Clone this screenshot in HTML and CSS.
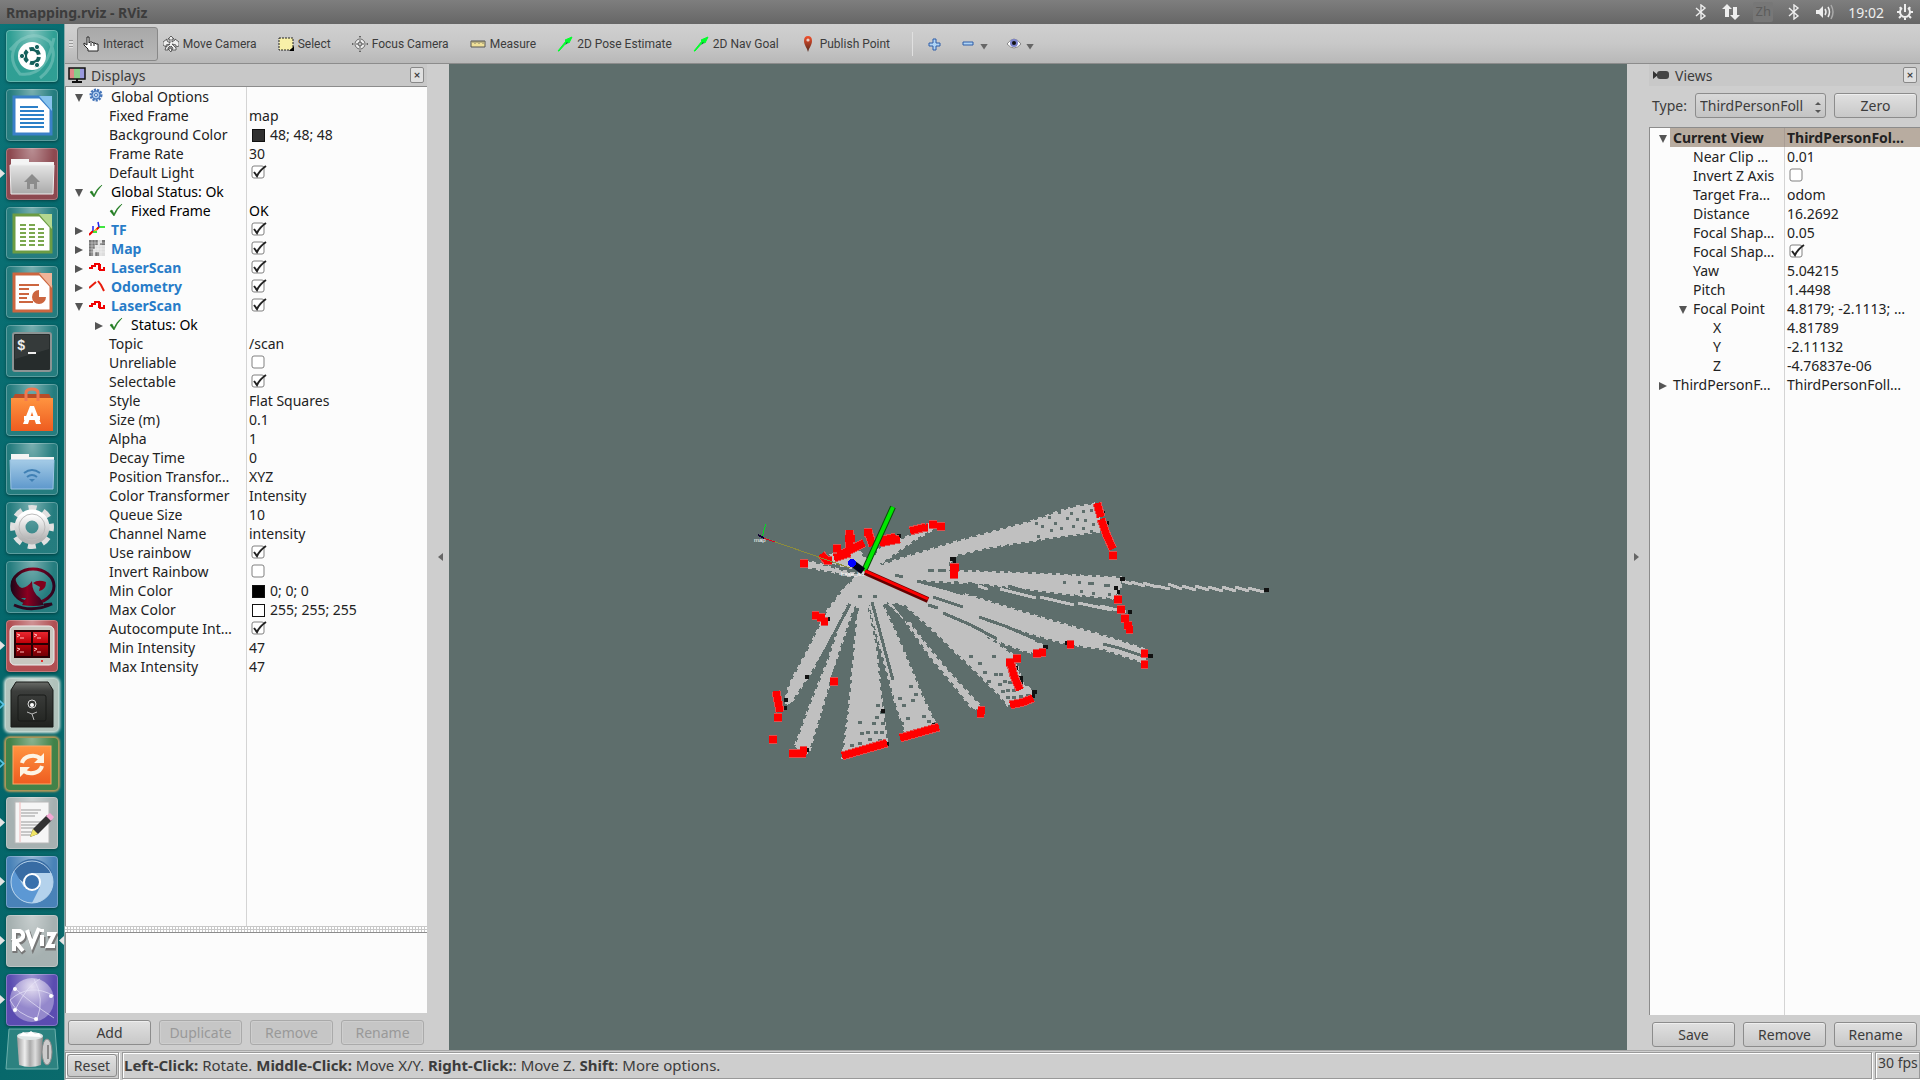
FILE: index.html
```html
<!DOCTYPE html>
<html lang="en">
<head>
<meta charset="utf-8">
<title>Rmapping.rviz - RViz</title>
<link rel="stylesheet" href="styles.css">
</head>
<body>
<svg class="defs" aria-hidden="true">
  <defs>
    <symbol id="tick" viewBox="0 0 16 16"><path d="M1 9l2-1 2 4Q8 5 13 2 8 7 5 14z" fill="#1e7a1e" stroke="#1e7a1e" stroke-width=".6"/></symbol>
    <symbol id="scan" viewBox="0 0 16 16"><path d="M0 9h3V7h3V5h4v6M10 6h1v5h4V9h1" fill="none" stroke="#f00000" stroke-width="2"/></symbol>
    <symbol id="arrow" viewBox="0 0 16 16"><path d="M1 15L9 5 8 4l7-3-3 6-2-1-8 9z" fill="#00ff2a" stroke="#00ff2a"/><path d="M8 9l2-3 1 1z" fill="#063"/></symbol>
    <symbol id="bt" viewBox="0 0 16 16"><path d="M3 4l9 8-4 3V1l4 3-9 8" fill="none" stroke="#eee" stroke-width="1.4"/></symbol>
    <linearGradient id="silver" x2="0" y2="1"><stop stop-color="#fff"/><stop offset="1" stop-color="#b4b4b4"/></linearGradient>
    <linearGradient id="folder" x2="0" y2="1"><stop stop-color="#e4e4e4"/><stop offset="1" stop-color="#aaa"/></linearGradient>
    <linearGradient id="blue" x2="0" y2="1"><stop stop-color="#a4cbe6"/><stop offset="1" stop-color="#5e98cc"/></linearGradient>
    <linearGradient id="orange" x2="0" y2="1"><stop stop-color="#ff9440"/><stop offset="1" stop-color="#ee5c20"/></linearGradient>
    <linearGradient id="pin" x2="0" y2="1"><stop stop-color="#f4502c"/><stop offset="1" stop-color="#50281c"/></linearGradient>
    <linearGradient id="redscreen" x2="0" y2="1"><stop stop-color="#e82830"/><stop offset=".45" stop-color="#c00008"/><stop offset="1" stop-color="#700006"/></linearGradient>
    <linearGradient id="safe" x2="0" y2="1"><stop stop-color="#6a6c68"/><stop offset=".2" stop-color="#3c3e3c"/><stop offset="1" stop-color="#20221f"/></linearGradient>
    <linearGradient id="can"><stop stop-color="#999"/><stop offset=".3" stop-color="#eee"/><stop offset=".5" stop-color="#aaa"/><stop offset=".7" stop-color="#ddd"/><stop offset="1" stop-color="#888"/></linearGradient>
    <radialGradient id="globe" cy=".2"><stop stop-color="#e6e0f2"/><stop offset="1" stop-color="#9488cc"/></radialGradient>
    <linearGradient id="wine"><stop stop-color="#1c0618"/><stop offset=".5" stop-color="#8c0020"/><stop offset="1" stop-color="#2c0620"/></linearGradient>
  </defs>
</svg>

<header class="titlebar">
  <h1>Rmapping.rviz - RViz</h1>
  <div class="tray">
    <svg width="16" height="16"><use href="#bt"/></svg>
    <svg width="18" height="18" viewBox="0 0 18 18"><path d="M5 1l5 5H7v8H3V6H0zM13 17l-5-5h3V4h4v8h3z" fill="#eee"/></svg>
    <span class="ime">Zh</span>
    <svg width="16" height="16"><use href="#bt"/></svg>
    <svg width="20" height="16" viewBox="0 0 20 16"><path d="M1 6h3l4-4v12l-4-4H1z" fill="#eee"/><path d="M10 5q2 3 0 6M13 3q3 5 0 10" fill="none" stroke="#eee" stroke-width="1.5"/><path d="M16 1q4 7 0 14" fill="none" stroke="#aaa" stroke-width="1.5"/></svg>
    <time>19:02</time>
    <svg width="16" height="16" viewBox="0 0 16 16"><path d="M5 4a5 5 0 1 0 6 0M8 0v8" fill="none" stroke="#eee" stroke-width="2"/><path d="M3 3l1 2M13 3l-1 2M0 8h3M13 8h3M2 14l2-2M14 14l-2-2M8 14v2" stroke="#eee" stroke-width="2"/></svg>
  </div>
</header>

<div class="desktop">
<nav class="launcher" aria-label="Launcher">
  <button class="tile dash" aria-label="Dash"><svg viewBox="0 0 52 52"><path d="M4 20Q24-4 44 12 54 32 34 48M48 8Q40 48 14 44 0 28 12 12" fill="none" stroke="#9fd8cf" stroke-opacity=".4" stroke-width="3"/><circle cx="26" cy="26" r="14" fill="#fff"/><circle cx="26" cy="26" r="7" fill="none" stroke="#14605c" stroke-width="4" stroke-dasharray="12 2.66" stroke-dashoffset="-1"/><g fill="#14605c" stroke="#fff"><circle cx="16" cy="26" r="2.6"/><circle cx="31" cy="17" r="2.6"/><circle cx="31" cy="35" r="2.6"/></g></svg></button>
  <button class="tile" aria-label="Writer"><svg viewBox="0 0 52 52"><path d="M8 8h26l11 12v25H8z" fill="#fff" stroke="#3a80c8" stroke-width="3"/><path d="M33 7h13v15z" fill="#86c2ec"/><path d="M14 18h18M14 22h24M14 26h24M14 30h24M14 34h24M14 38h24" stroke="#2c80c8" stroke-width="2"/></svg></button>
  <button class="tile files running" aria-label="Files"><svg viewBox="0 0 52 52"><path d="M5 18v-7h18v3h25v6z" fill="#f4f4f4"/><path d="M4 17h44l-1 29H5z" fill="url(#folder)" stroke="#eee"/><path d="M26 26l8 8h-3v7h-3v-5h-4v5h-3v-7h-3z" fill="#8c8c8c"/></svg></button>
  <button class="tile" aria-label="Calc"><svg viewBox="0 0 52 52"><path d="M8 8h26l11 12v25H8z" fill="#fff" stroke="#6c9c44" stroke-width="3"/><path d="M33 7h13v15z" fill="#b4d890"/><path d="M14 18h18M14 22h24M14 26h24M14 30h24M14 34h24M14 38h24" stroke="#7ca850" stroke-width="2" stroke-dasharray="6 3"/></svg></button>
  <button class="tile" aria-label="Impress"><svg viewBox="0 0 52 52"><path d="M8 8h26l11 12v25H8z" fill="#fff" stroke="#cc6640" stroke-width="3"/><path d="M33 7h13v15z" fill="#f0b498"/><path d="M13 19h20M13 23h10M13 28h10M13 32h8M13 36h14" stroke="#cc6640" stroke-width="2"/><path d="M33 24a7 7 0 1 0 7 7h-7z" fill="#cc6640"/></svg></button>
  <button class="tile" aria-label="Terminal"><svg viewBox="0 0 52 52"><rect x="7" y="8" width="38" height="38" rx="2" fill="#262c2c" stroke="#8c9494" stroke-width="2"/><path d="M9 10h34v14L9 34z" fill="#fff" opacity=".07"/><text x="11" y="25" class="prompt">$</text><path d="M22 28h8" stroke="#eee" stroke-width="2"/></svg></button>
  <button class="tile" aria-label="Software"><svg viewBox="0 0 52 52"><path d="M5 17l4-7h34l4 7z" fill="#b84c28"/><path d="M5 14h42v33H5z" fill="url(#orange)"/><path d="M20 17V9q0-4 6-4t6 4v8" fill="none" stroke="#f07850" stroke-width="3"/><path d="M17 40l7-18h4l7 18h-5l-4-12-4 12z" fill="#fff"/><path d="M18 34h16" stroke="#fff" stroke-width="4"/></svg></button>
  <button class="tile" aria-label="Network"><svg viewBox="0 0 52 52"><path d="M5 18v-7h18v3h25v6z" fill="#f4f4f4"/><path d="M4 17h44l-1 29H5z" fill="url(#blue)" stroke="#9cc4e4"/><path d="M18 30q8-6 16 0M21 34q5-4 10 0" fill="none" stroke="#4080b4" stroke-width="2"/><path d="M23 36h6l-3 3z" fill="#4080b4"/></svg></button>
  <button class="tile" aria-label="Settings"><svg viewBox="0 0 52 52"><circle cx="26" cy="25" r="19" fill="none" stroke="#e0e0e0" stroke-width="6" stroke-dasharray="8 6.92" stroke-dashoffset="4"/><circle cx="26" cy="25" r="12" fill="none" stroke="url(#silver)" stroke-width="11"/><circle cx="26" cy="25" r="13" fill="none" stroke="#bbb"/></svg></button>
  <button class="tile" aria-label="Browser"><svg viewBox="0 0 52 52"><ellipse cx="27" cy="25" rx="21" ry="17" fill="none" stroke="url(#wine)" stroke-width="3"/><path d="M5 27q-1-8 4-12 1 10 7 12 6-1 10-7 0 12 8 17l4 7q-10 2-22 0l4-7Q6 38 5 27z" fill="url(#wine)"/><path d="M27 22q5-4 13-1 0 8-7 9l1-4z" fill="#80001c"/><path d="M8 44q18 8 38-1l-8 1" fill="none" stroke="#2c0820" stroke-width="3"/></svg></button>
  <button class="tile red running" aria-label="Terminator"><svg viewBox="0 0 52 52"><rect x="4" y="6" width="44" height="39" rx="5" fill="#c8c8c0" stroke="#eee"/><rect x="8" y="10" width="36" height="28" fill="#280004"/><path d="M10 12h15v11H10zM27 12h15v11H27zM10 25h15v11H10zM27 25h15v11H27z" fill="url(#redscreen)"/><path d="M11 14l3 1-3 2M14 18h4M28 14l3 1-3 2M31 18h4M11 28l3 1-3 2M14 32h4M28 28l3 1-3 2M31 32h4" fill="none" stroke="#fbb"/><circle cx="36" cy="41" r="1" fill="#e00"/></svg></button>
  <button class="tile pale starting" aria-label="Safe"><svg viewBox="0 0 52 52"><path d="M5 11l5-8h32l5 8v37H5z" fill="url(#safe)" stroke="#181a18"/><rect x="12" y="16" width="28" height="26" rx="2" fill="none" stroke="#181a18"/><circle cx="26" cy="25" r="4" fill="none" stroke="#ddd"/><circle cx="26" cy="26" r="2" fill="#fff"/><path d="M26 35l-5-2M26 35l5-2M26 35l2 6" stroke="#bbb"/></svg></button>
  <button class="tile green starting" aria-label="Updater"><svg viewBox="0 0 52 52"><rect x="7" y="8" width="38" height="38" fill="url(#orange)" stroke="#ffa868"/><path d="M16 25a11 9 0 0 1 18-5M36 28a11 9 0 0 1-18 5" fill="none" stroke="#fdf4e4" stroke-width="4"/><path d="M38 15v10H28zM14 39V29h10z" fill="#fdf4e4"/></svg></button>
  <button class="tile grey running" aria-label="Text Editor"><svg viewBox="0 0 52 52"><path d="M9 5h34v41H9z" fill="#f6f6f6" stroke="#b8b8b8"/><path d="M14 5v40" stroke="#f0b8b8"/><path d="M15 13h20M15 16h17M15 19h14M15 25h21M15 28h20M15 31h16M15 35h16M15 38h10" stroke="#999"/><path d="M24 40l3-8 14-14 5 5-14 14z" fill="#333"/><path d="M24 40l3-8 5 5z" fill="#f0e464"/><path d="M40 19l4-3 4 4-3 4z" fill="#f4a8d4"/></svg></button>
  <button class="tile chromium running" aria-label="Chromium"><svg viewBox="0 0 52 52"><circle cx="26" cy="26" r="21" fill="#b4d2ec"/><path d="M6 18A21 21 0 0 1 46 17H26l-9 9z" fill="#386ca4"/><path d="M8 14Q2 24 7 35q7 12 19 12l8-16H18z" fill="#5c98d4"/><circle cx="26" cy="26" r="21" fill="none" stroke="#b8d4ec"/><circle cx="26" cy="26" r="9" fill="#fff"/><circle cx="26" cy="26" r="7" fill="#3870ac"/></svg></button>
  <button class="tile grey running active" aria-label="RViz"><svg viewBox="0 0 52 52"><g fill="none" stroke="#777" stroke-width="5" transform="translate(1 2)"><path d="M8 36V16h6q4 2 3 6-2 4-8 4l8 10M21 15l5 15 7-17M36 20v11M41 19h7l-6 12h7"/></g><g fill="none" stroke="#fff" stroke-width="4"><path d="M8 36V16h6q4 2 3 6-2 4-8 4l8 10M21 15l5 15 7-17M36 20v11M41 19h7l-6 12h7M36 14v3"/></g></svg></button>
  <button class="tile violet running" aria-label="Web"><svg viewBox="0 0 52 52"><circle cx="26" cy="26" r="22" fill="url(#globe)"/><path d="M4 26q20-18 44-4M10 15q12 12 38 29M9 36Q22 10 34 5M31 45q8-20-3-40M4 26q6 14 28 20" fill="none" stroke="#e6e2f6" stroke-opacity=".7"/><g fill="#fff"><circle cx="9" cy="15" r="2"/><circle cx="45" cy="22" r="2"/><circle cx="9" cy="36" r="2"/><circle cx="30" cy="45" r="2"/></g></svg></button>
  <button class="trash" aria-label="Trash"><svg viewBox="0 0 54 42"><path d="M4 1h46l3 40H1z" fill="#2c8280" stroke="#6cb0ac"/><path d="M12 9h26l-2 28q-11 4-22 0z" fill="url(#can)"/><ellipse cx="25" cy="8" rx="13" ry="4" fill="#dfe6e6"/><path d="M14 8l4-4 4 2 4-3 4 3 4-1 2 4" fill="#fff"/><ellipse cx="42" cy="24" rx="5" ry="13" fill="#ccc" stroke="#888"/><path d="M43 17v14" stroke="#888" stroke-width="2"/></svg></button>
</nav>

<div class="app">
  <div class="toolbar" role="toolbar">
    <span class="grip"></span>
    <button class="tool pressed"><svg viewBox="0 0 16 16"><path d="M4 1h2v6l1-1h2l1 1h2l1 1h2v7H5v-2L1 9V7l3 2z" fill="#fff" stroke="#222"/><path d="M8 7v3M11 7v3" stroke="#222"/></svg>Interact</button>
    <button class="tool"><svg viewBox="0 0 16 16"><path d="M8 0l3 3H9v3l3-2V3l4 3v4l-3 1V9L9 8l4 4v2H9l1-2-2-2v3h1l-1 3-3-3h2v-3l-2 2v2H2l1-3 4-3-4 1v2L0 9V6l4-3v2l3 2V3H5z" fill="#eee" stroke="#444" stroke-width=".8"/></svg>Move Camera</button>
    <button class="tool"><svg viewBox="0 0 16 16"><path d="M1 2h14v12H1z" fill="#f8f0a8" stroke="#222" stroke-dasharray="2 1"/><path d="M16 10v5h-5z" fill="#000"/></svg>Select</button>
    <button class="tool"><svg viewBox="0 0 16 16"><circle cx="8" cy="8" r="5" fill="#eee" stroke="#666"/><path d="M8 0v16M0 8h16" stroke="#666" stroke-width="2"/><path d="M8 1v14M1 8h14" stroke="#ddd"/><circle cx="8" cy="8" r="2" fill="none" stroke="#666"/></svg>Focus Camera</button>
    <button class="tool"><svg viewBox="0 0 16 16"><path d="M1 5h14v6H1z" fill="#f0e098" stroke="#555"/><path d="M3 5v2M5 5v3M7 5v2M9 5v3M11 5v2M13 5v3" stroke="#555" stroke-width=".7"/></svg>Measure</button>
    <button class="tool"><svg><use href="#arrow"/></svg>2D Pose Estimate</button>
    <button class="tool"><svg><use href="#arrow"/></svg>2D Nav Goal</button>
    <button class="tool"><svg viewBox="0 0 16 16"><path d="M8 0Q4 0 4 5q0 3 3 8l1 3 1-3q3-5 3-8 0-5-4-5z" fill="url(#pin)"/><circle cx="8" cy="4" r="1.6" fill="#e8d0c8"/></svg>Publish Point</button>
    <span class="sep"></span>
    <button class="tool icon" aria-label="Add tool"><svg viewBox="0 0 16 16"><path d="M7 3h3v4h4v3h-4v4H7v-4H3V7h4z" fill="#b0d4f4" stroke="#2c5ca8"/></svg></button>
    <button class="tool icon" aria-label="Remove tool"><svg viewBox="0 0 16 16"><path d="M3 6h10v3H3z" fill="#b0d4f4" stroke="#2c5ca8"/></svg><i class="drop"></i></button>
    <button class="tool icon" aria-label="Visibility"><svg viewBox="0 0 16 16"><path d="M1 8q7-10 14 0-7 8-14 0z" fill="#fff" stroke="#888"/><circle cx="8" cy="7" r="4" fill="#7c84cc"/><circle cx="8" cy="7" r="2" fill="#111"/></svg><i class="drop"></i></button>
  </div>

  <main class="workspace">
    <section class="dock displays">
      <div class="dock-title"><svg width="18" height="16" viewBox="0 0 18 16"><path d="M1 1h16v11H1z" fill="#d88"/><path d="M6 1h6v11H6z" fill="#8c8"/><path d="M12 1h5v11h-5z" fill="#99d"/><path d="M1 1h16v11H1z" fill="none" stroke="#111" stroke-width="1.5"/><path d="M8 12h2v2h4v2H4v-2h4z" fill="#111"/></svg><h2>Displays</h2><button class="close" aria-label="Close Displays">×</button></div>
      <div class="tree">
        <table>
          <colgroup><col class="name"><col></colgroup>
          <tr><td class="d0"><i class="open"></i><svg viewBox="0 0 16 16"><circle cx="7" cy="7" r="5" fill="#9cc0e8" stroke="#4474b8" stroke-width="3" stroke-dasharray="2 1"/><circle cx="7" cy="7" r="4" fill="#a8c8ec" stroke="#4474b8"/><circle cx="7" cy="7" r="1.5" fill="#fff" stroke="#4474b8"/></svg>Global Options</td><td></td></tr>
          <tr><td class="d1">Fixed Frame</td><td>map</td></tr>
          <tr><td class="d1">Background Color</td><td><b class="swatch dark"></b>48; 48; 48</td></tr>
          <tr><td class="d1">Frame Rate</td><td>30</td></tr>
          <tr><td class="d1"><label for="c1">Default Light</label></td><td><input type="checkbox" id="c1" checked></td></tr>
          <tr class="ok"><td class="d0"><i class="open"></i><svg><use href="#tick"/></svg>Global Status: Ok</td><td></td></tr>
          <tr class="ok"><td class="d1"><svg><use href="#tick"/></svg>Fixed Frame</td><td>OK</td></tr>
          <tr class="plugin"><td class="d0"><i class="shut"></i><svg viewBox="0 0 16 16"><path d="M0 14l4-4M10 6L7 9" stroke="#e00" stroke-width="2"/><path d="M10 6h6M4 11h4" stroke="#0d0" stroke-width="1.5"/><path d="M9 1l1 5M4 5v5" stroke="#22e" stroke-width="1.5"/><path d="M5 10l3-2" stroke="#ea0" stroke-width="1.5"/></svg><label for="c2">TF</label></td><td><input type="checkbox" id="c2" checked></td></tr>
          <tr class="plugin"><td class="d0"><i class="shut"></i><svg viewBox="0 0 16 16"><path d="M0 0h16v16H0z" fill="#ddd"/><path d="M0 0h9v5H6v4H4v7H0zM13 0h3v5h-5V3h2zM6 12h4v4H6z" fill="#777"/><path d="M3 0v16M6 0v16M9 0v16M12 0v16M0 3h16M0 6h16M0 9h16M0 12h16" stroke="#fff" stroke-width=".4"/></svg><label for="c3">Map</label></td><td><input type="checkbox" id="c3" checked></td></tr>
          <tr class="plugin"><td class="d0"><i class="shut"></i><svg><use href="#scan"/></svg><label for="c4">LaserScan</label></td><td><input type="checkbox" id="c4" checked></td></tr>
          <tr class="plugin"><td class="d0"><i class="shut"></i><svg viewBox="0 0 16 16"><path d="M0 10l7-6M9 3l3 4 3 6" fill="none" stroke="#e81c0c" stroke-width="2"/></svg><label for="c5">Odometry</label></td><td><input type="checkbox" id="c5" checked></td></tr>
          <tr class="plugin"><td class="d0"><i class="open"></i><svg><use href="#scan"/></svg><label for="c6">LaserScan</label></td><td><input type="checkbox" id="c6" checked></td></tr>
          <tr class="ok"><td class="d1 has-toggle"><i class="shut"></i><svg><use href="#tick"/></svg>Status: Ok</td><td></td></tr>
          <tr><td class="d1">Topic</td><td>/scan</td></tr>
          <tr><td class="d1"><label for="c7">Unreliable</label></td><td><input type="checkbox" id="c7"></td></tr>
          <tr><td class="d1"><label for="c8">Selectable</label></td><td><input type="checkbox" id="c8" checked></td></tr>
          <tr><td class="d1">Style</td><td>Flat Squares</td></tr>
          <tr><td class="d1">Size (m)</td><td>0.1</td></tr>
          <tr><td class="d1">Alpha</td><td>1</td></tr>
          <tr><td class="d1">Decay Time</td><td>0</td></tr>
          <tr><td class="d1">Position Transfor…</td><td>XYZ</td></tr>
          <tr><td class="d1">Color Transformer</td><td>Intensity</td></tr>
          <tr><td class="d1">Queue Size</td><td>10</td></tr>
          <tr><td class="d1">Channel Name</td><td>intensity</td></tr>
          <tr><td class="d1"><label for="c9">Use rainbow</label></td><td><input type="checkbox" id="c9" checked></td></tr>
          <tr><td class="d1"><label for="c10">Invert Rainbow</label></td><td><input type="checkbox" id="c10"></td></tr>
          <tr><td class="d1">Min Color</td><td><b class="swatch black"></b>0; 0; 0</td></tr>
          <tr><td class="d1">Max Color</td><td><b class="swatch white"></b>255; 255; 255</td></tr>
          <tr><td class="d1"><label for="c11">Autocompute Int…</label></td><td><input type="checkbox" id="c11" checked></td></tr>
          <tr><td class="d1">Min Intensity</td><td>47</td></tr>
          <tr><td class="d1">Max Intensity</td><td>47</td></tr>
        </table>
      </div>
      <div class="splitter"></div>
      <div class="help"></div>
      <div class="buttons"><button class="btn">Add</button><button class="btn" disabled>Duplicate</button><button class="btn" disabled>Remove</button><button class="btn" disabled>Rename</button></div>
    </section>

    <div class="handle"><i class="left"></i></div>

    <section class="viewport" aria-label="3D view">
      <svg viewBox="449 64 1178 986" shape-rendering="crispEdges">
        <!-- free space swept by the laser -->
        <g class="free">
          <path d="M862 572L900 559 953 543 1030 522 1070 508 1094 504 1102 531 1060 536 1030 541 990 547 956 555 949 562 949 571 1040 574 1122 578 1120 590 1112 598 1080 595 1050 592 985 584 917 580 920 583 970 596 1038 617 1110 638 1146 650 1146 663 1103 649 1064 643 1025 632 980 617 1025 636 1046 647 1034 653 1022 650 992 639 960 625 943 612 960 622 978 632 994 642 1014 656 1022 683 1034 692 1030 700 1008 705 1003 699 985 680 960 656 930 627 905 605 884 586z"/>
          <path d="M878 586L890 603 910 624 930 650 954 678 980 706 973 709 950 680 930 656 905 620 888 602z"/>
          <path d="M870 580L884 608 897 636 910 667 922 696 936 726 906 734 896 704 884 660 873 620 866 585z"/>
          <path d="M868 580L866 600 875 642 882 703 887 742 843 757 849 710 854 656 858 610 852 585z"/>
          <path d="M866 580L852 612 836 660 822 708 808 754 795 747 810 706 828 661 846 608z"/>
          <path d="M856 578L846 606 830 640 812 670 790 704 785 702 790 684 806 654 828 610 845 588z"/>
          <path d="M866 572L846 588 844 602 858 606 871 603 884 602 902 604 905 590z"/>
          <path d="M870 577L850 573 807 561 807 567 830 571 860 578z"/>
          <path d="M864 572L880 548 910 536 930 524 938 522 937 527 914 540 874 568z"/>
          <path d="M822 558L856 548 866 560 862 570 840 565z"/>
        </g>
        <path class="ray" d="M968 583l20 6M1000 589l36 9M1040 597l34 8M1078 603l34 7M1100 606l26 6"/>
        <path class="ray" d="M1122 581l10 3M1131 582l14 4M1143 583l14 4M1156 586l14 3M1168 584l14 5M1182 586l14 4M1195 586l14 4M1208 587l15 4M1222 587l14 4M1235 587l14 4M1248 588l16 4"/>
        <!-- unexplored slits between neighbouring beams -->
        <path class="slit" d="M917 581l30 8 16 5M933 597l30 10M928 605l10 3M943 613l28 12 26 14M979 617l26 9 28 12 18 8M1103 644l16 4 24 8M968 583l10 3M984 585l12 4M1008 586l20 6M895 575l8 2M928 570h6M938 570h8M850 604l-16 30-16 30M858 608l-16 44-10 26M872 602l8 30 8 30 5 18M886 604l10 20 6 12M894 604l14 18"/>
        <path class="holes" d="M1035 523h3M1041 526h3M1054 523h3M1048 517h3M1058 512h3M1066 518h3M1070 513h3M1076 519h3M1082 511h3M1084 520h3M1090 510h3M1050 530h3M1060 528h3M1072 526h3M1082 528h3M1092 524h3M1090 531h3M1037 536h3M1070 506h3M1063 582h3M1078 582h3M1088 583h6M1104 585h6M1080 591h3M1092 593h3M1108 594h3M954 582h4M969 656h4M992 656h4M978 663h4M983 672h4M994 674h4M999 674h4M987 681h4M998 684h4M1003 681h4M1008 682h4M1001 691h4M1006 690h4M1012 690h4M1006 697h4M1012 697h4M1019 696h4M1026 695h4M909 686h4M914 694h4M911 700h4M898 698h4M902 705h4M906 718h4M900 723h4M922 716h4M927 721h4M876 705h4M880 712h4M875 717h4M881 723h4M872 723h4M858 722h4M866 732h4M874 732h4M880 732h4M860 733h4M850 745h4M858 743h4M868 739h4M878 740h4M858 596h4M873 596h4"/>
        <!-- occupied cells -->
        <path class="wall" d="M932 522h5M950 559h6M953 563h3M897 536h4M1102 513h3M1106 523h3M1120 579h5M1114 588h4M1117 592h3M1128 612h4M1264 590h5M1148 656h5M1065 643h4M1043 647h5M1015 668h3M1019 678h4M1020 682h3M1032 692h5M1032 696h3M805 677h4M784 700h4M783 708h4M881 711h4M885 744h4M932 725h5M805 750h4M826 619h4M1018 658h3M826 558h4"/>
        <!-- laser returns -->
        <g class="halo">
          <path id="returns" d="M910 531L926 527M926 527h2M929 524h8M937 526h8M845 538h10M849 530V552M838 556L864 543M834 558L850 553M833 548h8M821 554L826 560 832 560M800 563h8M864 532h8M868 531L873 546M880 543L900 539M878 541L896 537M812 615h7M817 617h8M821 621h7M830 681h8M776 691L780 712M774 717h8M769 739h8M789 753h17M800 750h7M842 756L887 743M900 738L939 727M977 713h7M978 710h7M950 567h9M950 574h8M1097 503L1101 517M1101 519L1107 536 1113 549M1109 555h8M1114 599h8M1117 609h8M1121 618h8M1124 625h8M1126 629h7M1033 653h8M1039 652h7M1067 644h7M1141 653h7M1141 664h7M1006 662h8M1013 658h8M1010 660L1014 676 1020 690M1010 705L1024 702 1033 698"/>
        </g>
        <use href="#returns" class="hit"/>
        <!-- odometry path and frames -->
        <path d="M764 538L850 568" stroke="#8c8c3c"/>
        <path d="M762 537l4-13" stroke="#0d2"/><path d="M763 538l12 4" stroke="#d02"/><path d="M758 535l6 3" stroke="#103" stroke-width="2"/>
        <text x="754" y="542">map</text>
        <text x="841" y="576">base_link</text>
        <g shape-rendering="auto" fill="none">
          <path d="M864 571L893 507" stroke="#075007" stroke-width="6"/><path d="M864 571L893 507" stroke="#00e800" stroke-width="4"/>
          <path d="M865 572L928 600" stroke="#600" stroke-width="6"/><path d="M865 571L928 599" stroke="#f00" stroke-width="3"/>
          <path d="M852 563L863 571" stroke="#000018" stroke-width="7"/>
        </g>
        <circle cx="852" cy="563" r="4" fill="#00f"/>
      </svg>
    </section>

    <div class="handle"><i class="right"></i></div>

    <section class="dock views">
      <div class="dock-title"><svg width="18" height="16" viewBox="0 0 18 16"><path d="M1 4l5 4-5 4z" fill="#333"/><rect x="5" y="4" width="12" height="8" rx="3" fill="#444"/></svg><h2>Views</h2><button class="close" aria-label="Close Views">×</button></div>
      <div class="type-row"><label for="type">Type:</label><span class="combo"><select id="type"><option>ThirdPersonFoll</option></select><i class="up"></i><i class="down"></i></span><button class="btn">Zero</button></div>
      <div class="tree">
        <table>
          <colgroup><col class="name"><col></colgroup>
          <tr class="current"><td class="d0"><i class="open"></i>Current View</td><td>ThirdPersonFol…</td></tr>
          <tr><td class="d1">Near Clip …</td><td>0.01</td></tr>
          <tr><td class="d1"><label for="v1">Invert Z Axis</label></td><td><input type="checkbox" id="v1"></td></tr>
          <tr><td class="d1">Target Fra…</td><td>odom</td></tr>
          <tr><td class="d1">Distance</td><td>16.2692</td></tr>
          <tr><td class="d1">Focal Shap…</td><td>0.05</td></tr>
          <tr><td class="d1"><label for="v2">Focal Shap…</label></td><td><input type="checkbox" id="v2" checked></td></tr>
          <tr><td class="d1">Yaw</td><td>5.04215</td></tr>
          <tr><td class="d1">Pitch</td><td>1.4498</td></tr>
          <tr><td class="d1 has-toggle"><i class="open"></i>Focal Point</td><td>4.8179; -2.1113; …</td></tr>
          <tr><td class="d2">X</td><td>4.81789</td></tr>
          <tr><td class="d2">Y</td><td>-2.11132</td></tr>
          <tr><td class="d2">Z</td><td>-4.76837e-06</td></tr>
          <tr><td class="d0"><i class="shut"></i>ThirdPersonF…</td><td>ThirdPersonFoll…</td></tr>
        </table>
      </div>
      <div class="buttons"><button class="btn">Save</button><button class="btn">Remove</button><button class="btn">Rename</button></div>
    </section>
  </main>

  <footer class="status">
    <div class="cell"><button class="btn">Reset</button></div>
    <p class="cell message"><b>Left-Click:</b> Rotate. <b>Middle-Click:</b> Move X/Y. <b>Right-Click:</b>: Move Z. <b>Shift</b>: More options.</p>
    <div class="cell fps">30 fps</div>
  </footer>
</div>
</div>
</body>
</html>
```
FILE: styles.css
```css
* { box-sizing: border-box; }
body {
  margin: 0;
  min-height: 100vh;
  display: flex;
  flex-direction: column;
  background: #cecece;
  color: #3c3c3c;
  font: 14px/19px "Noto Sans", "Open Sans", sans-serif;
}
button, select { font: inherit; color: inherit; margin: 0; padding: 0; border: 0; background: none; }
h1, h2, p { margin: 0; font-size: inherit; font-weight: normal; }
.defs { position: absolute; width: 0; height: 0; }

/* top panel */
.titlebar {
  display: flex;
  align-items: center;
  justify-content: space-between;
  height: 24px;
  padding: 0 7px 0 6px;
  background: linear-gradient(#7e7e7e, #666);
}
.titlebar h1 { font-weight: bold; color: #3c3c3c; }
.tray { display: flex; align-items: center; gap: 13px; color: #eee; }
.ime { width: 20px; height: 20px; background: #777; color: #5c5c5c; text-align: center; border-radius: 2px; font-size: 13px; }

.desktop { flex: 1; display: flex; }

/* launcher */
.launcher {
  width: 65px;
  flex: none;
  display: flex;
  flex-direction: column;
  gap: 7px;
  padding: 6px 0 0 6px;
  background: linear-gradient(100deg, #0c7478, #04666a 50%, #0a6a6c);
  border-right: 1px solid #8aa;
}
.tile {
  position: relative;
  width: 52px;
  height: 52px;
  border-radius: 4px;
  background: radial-gradient(ellipse at 50% 0, rgba(255,255,255,.45), rgba(255,255,255,.1) 60%), #0c6e70;
  box-shadow: inset 0 0 0 1px rgba(255,255,255,.25), 0 1px 3px rgba(0,40,40,.6);
}
.tile svg, .trash svg { display: block; width: 100%; height: 100%; }
.tile.dash { background-color: #189488; }
.tile.files { background-color: #80343c; }
.tile.red { background-color: #a83c40; }
.tile.pale { background-color: #a8bcb4; box-shadow: 0 0 3px 2px #dfe8e0; }
.tile.green { background-color: #2c7434; box-shadow: 0 0 2px 2px #b49858; }
.tile.grey { background-color: #9ca8a8; }
.tile.chromium { background-color: #3474b0; }
.tile.violet { background-color: #4838a8; }
.running::before, .starting::before, .active::after {
  content: "";
  position: absolute;
  left: -6px;
  top: 21px;
  width: 5px;
  height: 9px;
  background: #e4e4e4;
  clip-path: polygon(0 0, 100% 50%, 0 100%);
}
.starting::before { background: #58c4e4; clip-path: polygon(0 0, 100% 50%, 0 100%, 0 75%, 50% 50%, 0 25%); }
.active::after { left: 53px; clip-path: polygon(100% 0, 0 50%, 100% 100%); }
.trash { width: 54px; height: 42px; margin: -5px 0 10px -1px; }
.prompt { font: bold 14px "Liberation Mono", monospace; fill: #eee; }

.app { flex: 1; min-width: 0; display: flex; flex-direction: column; }

/* toolbar */
.toolbar {
  display: flex;
  align-items: center;
  height: 40px;
  padding: 0 0 0 4px;
  background: linear-gradient(#d0d0d0, #c8c8c8 50%, #b8b8b8);
  border-bottom: 1px solid #8c8c8c;
  font: 12px/16px Roboto, sans-serif;
}
.grip { width: 4px; height: 8px; margin-right: 4px; background: repeating-linear-gradient(#999 0 1px, #ddd 1px 3px); }
.tool { display: flex; align-items: center; gap: 4px; height: 34px; padding: 0 16px 0 5px; white-space: nowrap; }
.tool svg { width: 16px; height: 16px; }
.tool.pressed { padding-right: 13px; border: 1px solid #888; border-radius: 3px; background: linear-gradient(#a8a8a8, #b8b8b8); }
.tool.icon { padding: 0 9px; }
.sep { width: 1px; height: 24px; margin: 0 4px 0 6px; background: #e0e0e0; }
.drop { width: 8px; height: 6px; margin-top: 6px; background: #666; clip-path: polygon(0 0, 100% 0, 50% 100%); }

/* docks */
.workspace { flex: 1; display: flex; }
.dock { flex: none; display: flex; flex-direction: column; }
.displays { width: 362px; }
.views { width: 271px; }
.dock-title { display: flex; align-items: center; gap: 5px; height: 22px; padding: 0 3px; background: #c8c8c8; }
.close {
  width: 14px;
  height: 16px;
  margin-left: auto;
  border: 1px solid #888;
  border-radius: 2px;
  background: #e0e0e0;
  font: bold 9px/13px "DejaVu Sans", sans-serif;
}
.tree {
  flex: 1;
  border: solid #8c8c8c;
  border-width: 1px 0 0 1px;
  color: #222;
}
.displays .tree { background: linear-gradient(#d4d4d4, #d4d4d4) 180px 0 / 1px 100% no-repeat #fcfcfc; }
.views .tree { background: linear-gradient(#d4d4d4, #d4d4d4) 134px 0 / 1px 100% no-repeat #fcfcfc; }
table { width: 100%; table-layout: fixed; border-collapse: collapse; }
.displays .name { width: 181px; }
.views .name { width: 135px; }
td { height: 19px; padding: 0; white-space: nowrap; overflow: hidden; }
td + td { padding-left: 2px; }
td svg { width: 16px; height: 16px; margin: 1px 6px 0 0; vertical-align: top; }
td i { display: inline-block; width: 8px; height: 8px; margin-right: 6px; background: #555; }
.open { clip-path: polygon(0 0, 100% 0, 50% 100%); }
.shut { clip-path: polygon(0 0, 100% 50%, 0 100%); }
.d0 { padding-left: 9px; }
.d1 { padding-left: 43px; }
.d1.has-toggle { padding-left: 29px; }
.d2 { padding-left: 63px; }
.ok td { color: #000; }
.plugin td { font-weight: bold; color: #287cc8; }
.current td { font-weight: bold; background: #b8aca0; }
.current td:first-child { background: linear-gradient(90deg, #fcfcfc 20px, #b8aca0 20px 134px, #a89c94 134px); }
input[type="checkbox"] {
  display: block;
  appearance: none;
  width: 16px;
  height: 15px;
  margin: 0 0 0 2px;
  background: url("data:image/svg+xml,%3Csvg xmlns='http://www.w3.org/2000/svg' width='16' height='15'%3E%3Crect x='1' y='1' width='12' height='12' rx='2' fill='%23fff' stroke='%23808080'/%3E%3C/svg%3E") no-repeat;
}
input[type="checkbox"]:checked {
  background-image: url("data:image/svg+xml,%3Csvg xmlns='http://www.w3.org/2000/svg' width='16' height='15'%3E%3Crect x='1' y='1' width='12' height='12' rx='2' fill='%23fff' stroke='%23808080'/%3E%3Cpath d='M3 7l3 4Q9 5 15 1' fill='none' stroke='%23222' stroke-width='2'/%3E%3C/svg%3E");
}
.swatch { display: inline-block; width: 13px; height: 13px; margin: 0 5px 0 3px; border: 1px solid #111; vertical-align: -2px; }
.swatch.dark { background: #303030; }
.swatch.black { background: #000; }
.swatch.white { background: #fff; }
.splitter { height: 6px; background: radial-gradient(circle at 1px 1px, #fff 1px, transparent 1px) 0 1px / 3px 3px #c8c8c8; }
.help { height: 81px; background: #fcfcfc; border: solid #8c8c8c; border-width: 1px 0 0 1px; }
.buttons { display: flex; gap: 8px; padding: 7px 3px 5px; }
.views .buttons { padding: 7px 3px 3px; }
.btn {
  width: 83px;
  height: 25px;
  border: 1px solid #8c8c8c;
  border-radius: 3px;
  background: linear-gradient(#e0e0e0, #c8c8c8);
  box-shadow: inset 0 1px 0 #eee;
  color: #3c3c3c;
}
.btn:disabled { color: #999; border-color: #aaa; background: #c6c6c6; box-shadow: inset 0 0 0 1px #cecece; }
.handle { width: 22px; flex: none; display: flex; align-items: center; justify-content: flex-end; }
.handle i { width: 5px; height: 8px; margin-right: 6px; background: #666; }
.left { clip-path: polygon(100% 0, 0 50%, 100% 100%); }
.handle .right { margin-right: 10px; clip-path: polygon(0 0, 100% 50%, 0 100%); }
.type-row { display: flex; align-items: center; gap: 8px; padding: 7px 3px 9px; }
.type-row label { width: 35px; }
.combo { position: relative; flex: 1; height: 25px; }
.combo select {
  width: 100%;
  height: 100%;
  padding-left: 4px;
  appearance: none;
  border: 1px solid #8c8c8c;
  border-radius: 3px;
  background: linear-gradient(#d8d8d8, #c4c4c4);
}
.combo i { position: absolute; right: 5px; width: 6px; height: 3px; background: #555; }
.up { top: 9px; clip-path: polygon(50% 0, 100% 100%, 0 100%); }
.down { top: 17px; clip-path: polygon(0 0, 100% 0, 50% 100%); }

/* 3D view */
.viewport { flex: 1; min-width: 0; background: #5e6e6c; display: flex; }
.viewport svg { flex: 1; width: 0; }
.viewport path { fill: none; }
.viewport .free path { fill: #c0c0c0; stroke: #c0c0c0; stroke-width: 3; stroke-dasharray: 4 4; }
.ray { stroke: #c0c0c0; stroke-width: 3; }
.slit { stroke: #5e6e6c; stroke-width: 3; }
.holes { stroke: #5e6e6c; stroke-width: 3; }
.wall { stroke: #111; stroke-width: 4; }
.halo { stroke: #e05050; stroke-width: 9; }
.hit { stroke: #f00; stroke-width: 7; }
.viewport text { font: 6px "Liberation Sans", sans-serif; fill: #fff; }

/* status bar */
.status { display: flex; gap: 3px; height: 30px; padding: 1px 0 2px; border-top: 1px solid #a8a8a8; }
.cell { height: 27px; border: 1px solid #999; box-shadow: inset 1px 1px 0 #fff, 1px 1px 0 #fff; padding: 1px; }
.status .btn { width: 50px; height: 23px; display: block; }
.message { flex: 1; font-size: 15px; line-height: 23px; white-space: nowrap; overflow: hidden; }
.fps { width: 45px; padding: 0 0 0 2px; white-space: nowrap; overflow: hidden; }
```
